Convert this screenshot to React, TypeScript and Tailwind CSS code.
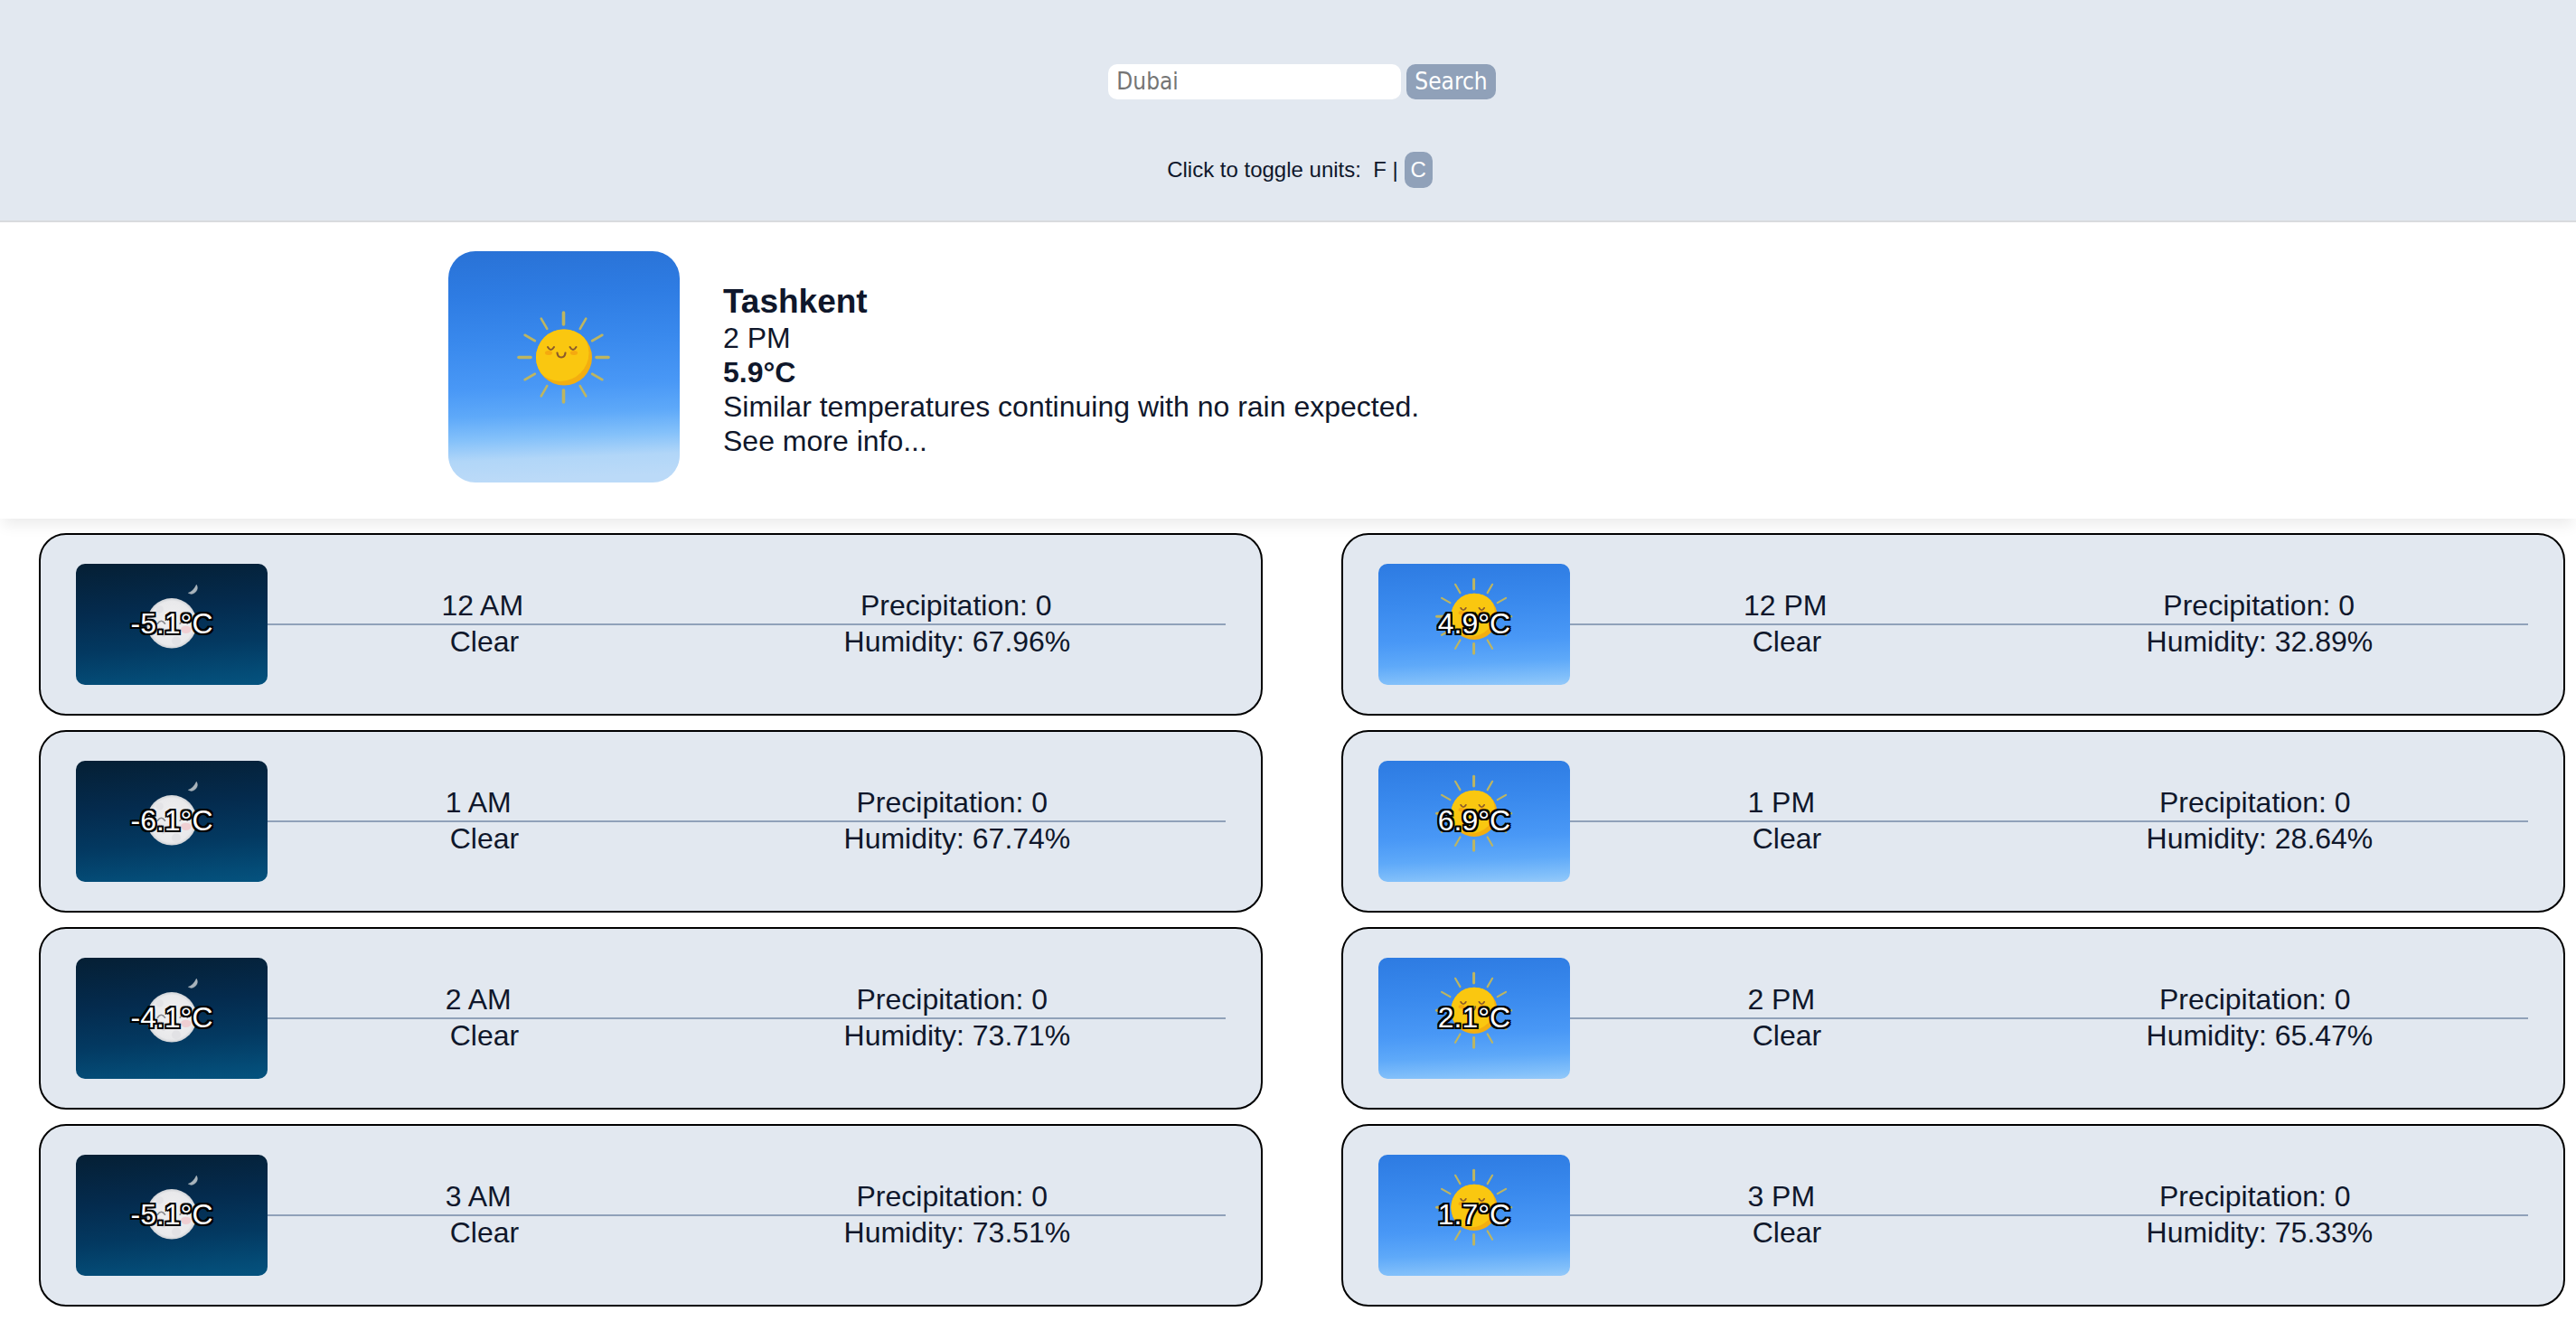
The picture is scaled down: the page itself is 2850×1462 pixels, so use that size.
import { useState } from "react";

type Hour = { time: string; temp: number; humidity: string; night: boolean };

const morning: Hour[] = [
  { time: "12 AM", temp: -5.1, humidity: "67.96", night: true },
  { time: "1 AM", temp: -6.1, humidity: "67.74", night: true },
  { time: "2 AM", temp: -4.1, humidity: "73.71", night: true },
  { time: "3 AM", temp: -5.1, humidity: "73.51", night: true },
];

const afternoon: Hour[] = [
  { time: "12 PM", temp: 4.9, humidity: "32.89", night: false },
  { time: "1 PM", temp: 6.9, humidity: "28.64", night: false },
  { time: "2 PM", temp: 2.1, humidity: "65.47", night: false },
  { time: "3 PM", temp: 1.7, humidity: "75.33", night: false },
];

const rayAngles = [0, 30, 60, 90, 120, 150, 180, 210, 240, 270, 300, 330];

function SunnySky({ id, className }: { id: string; className: string }) {
  return (
    <svg viewBox="0 0 256 256" preserveAspectRatio="xMidYMid slice" className={className} role="img" aria-label="Clear sky with sun">
      <defs>
        <linearGradient id={id} x1="0" y1="0" x2="0.04" y2="1">
          <stop offset="0" stopColor="#2972d6" />
          <stop offset="0.2" stopColor="#2e7ce3" />
          <stop offset="0.4" stopColor="#3989ed" />
          <stop offset="0.6" stopColor="#4998f6" />
          <stop offset="0.72" stopColor="#5ea9f9" />
          <stop offset="0.82" stopColor="#84c1fa" />
          <stop offset="0.91" stopColor="#b1d6f8" />
          <stop offset="1" stopColor="#bbdaf8" />
        </linearGradient>
        <clipPath id={id + "-disc"}>
          <circle cx="128" cy="117.500" r="31" />
        </clipPath>
      </defs>
      <rect width="256" height="256" fill={"url(#" + id + ")"} />
      {rayAngles.map((angle) => (
        <line
          key={angle}
          x1="127.500"
          y1="81"
          x2="127.500"
          y2="68"
          stroke="#bdb561"
          strokeWidth={angle % 90 === 0 ? 3.6 : 2.6}
          strokeLinecap="round"
          transform={"rotate(" + angle + " 127.5 117.5)"}
        />
      ))}
      <circle cx="128" cy="117.500" r="31" fill="#f3ae10" />
      <circle cx="124" cy="112.500" r="31.500" fill="#fac710" clipPath={"url(#" + id + "-disc)"} />
      <ellipse cx="111" cy="112.500" rx="4" ry="2.500" fill="#f5a90f" />
      <ellipse cx="139" cy="112.500" rx="4" ry="2.500" fill="#f5a90f" />
      <g fill="none" stroke="#8a5a2b" strokeLinecap="round">
        <path d="M110 106 q3.500 6 7 0" strokeWidth="2" />
        <path d="M134.500 106 q3.500 6 7 0" strokeWidth="2" />
        <path d="M120.500 112.500 q0.500 5 4.500 5 t4.500 -5" strokeWidth="2.200" />
      </g>
    </svg>
  );
}

function NightSky({ id, className }: { id: string; className: string }) {
  return (
    <svg viewBox="0 0 256 256" preserveAspectRatio="xMidYMid slice" className={className} role="img" aria-label="Clear sky with moon">
      <defs>
        <linearGradient id={id} x1="0" y1="0" x2="0.08" y2="1">
          <stop offset="0" stopColor="#041b2c" />
          <stop offset="0.2" stopColor="#052036" />
          <stop offset="0.45" stopColor="#042b4e" />
          <stop offset="0.65" stopColor="#033961" />
          <stop offset="0.82" stopColor="#044c77" />
          <stop offset="1" stopColor="#055d8a" />
        </linearGradient>
        <radialGradient id={id + "-moon"}>
          <stop offset="0" stopColor="#f0f0f1" />
          <stop offset="0.88" stopColor="#e9e9eb" />
          <stop offset="1" stopColor="#cfd2d6" />
        </radialGradient>
      </defs>
      <rect width="256" height="256" fill={"url(#" + id + ")"} />
      <circle cx="128" cy="126.500" r="33.500" fill={"url(#" + id + "-moon)"} />
      <circle cx="112" cy="108" r="5" fill="#e3e3e6" />
      <circle cx="134" cy="150" r="6" fill="#e2e2e5" />
      <circle cx="117" cy="142" r="3" fill="#dedee1" />
      <ellipse cx="147" cy="135" rx="7" ry="5" fill="#efcfd3" />
      <ellipse cx="110" cy="135" rx="5" ry="4" fill="#ecdcdf" />
      <g fill="none" stroke="#8b8b90" strokeWidth="2" strokeLinecap="round">
        <path d="M109 127 q5 -7 10 0" />
        <path d="M139 127 q5 -7 10 0" />
      </g>
      <path d="M161 75 A8 8 0 0 1 150 86 Q157 84 161 75 Z" fill="#a9b4bc" stroke="#a9b4bc" strokeWidth="0.500" strokeLinejoin="round" />
    </svg>
  );
}

function formatTemp(celsius: number, unit: "C" | "F") {
  const value = unit === "C" ? celsius : (celsius * 9) / 5 + 32;
  return value.toFixed(1) + "°" + unit;
}

function HourCard({ hour, unit }: { hour: Hour; unit: "C" | "F" }) {
  const id = "sky-" + hour.time.replace(" ", "-");
  return (
    <article className="flex items-center rounded-[30px] border-2 border-black bg-slate-200 px-[39px] py-8">
      <div className="grid h-[134px] w-[212px] shrink-0 place-items-center overflow-hidden rounded-[10px]">
        {hour.night ? (
          <NightSky id={id} className="col-start-1 row-start-1 h-[134px] w-full" />
        ) : (
          <SunnySky id={id} className="col-start-1 row-start-1 h-[134px] w-full" />
        )}
        <span className="z-10 col-start-1 row-start-1 pb-0.5 leading-9 text-white [text-shadow:-2px_-2px_0_#000,2px_-2px_0_#000,-2px_2px_0_#000,2px_2px_0_#000,0_-2px_0_#000,0_2px_0_#000,-2px_0_0_#000,2px_0_0_#000]">
          {formatTemp(hour.temp, unit)}
        </span>
      </div>
      <div className="flex-1 leading-9">
        <div className="flex justify-around border-b-2 border-slate-400 px-1.5 pb-0.5">
          <p>{hour.time}</p>
          <p>Precipitation: 0</p>
        </div>
        <div className="flex justify-around pb-0.5">
          <p className="mr-4 ml-[30px]">Clear</p>
          <p>Humidity: {hour.humidity}%</p>
        </div>
      </div>
    </article>
  );
}

export default function App() {
  const [unit, setUnit] = useState<"C" | "F">("C");
  const active = "rounded-[10px] bg-slate-400 px-[7px] leading-10 text-white";
  const idle = "leading-10";

  return (
    <div className="bg-white font-['Liberation_Sans',Arial,sans-serif] text-[32px] text-slate-900">
      <header className="flex flex-col items-center gap-[58px] border-b-2 border-[#d9dbde] bg-slate-200 pt-[71px] pb-9 pl-[31px]">
        <form className="flex gap-1.5 font-[Tahoma,'DejaVu_Sans_Condensed','Noto_Sans',sans-serif] text-[26px]" onSubmit={(e) => e.preventDefault()}>
          <input
            type="text"
            aria-label="City"
            placeholder="Dubai"
            className="h-[39px] w-[324px] rounded-[10px] bg-white px-[9px] placeholder:text-[#757575]"
          />
          <button type="submit" className="h-[39px] rounded-[10px] bg-slate-400 px-[9px] leading-[39px] text-white">
            Search
          </button>
        </form>
        <div className="pr-[5px] text-2xl leading-10 whitespace-pre">
          {"Click to toggle units:  "}
          <button type="button" className={unit === "F" ? active : idle} onClick={() => setUnit("F")}>
            F
          </button>
          {" | "}
          <button type="button" className={unit === "C" ? active : idle} onClick={() => setUnit("C")}>
            C
          </button>
        </div>
      </header>

      <main>
        <section className="flex gap-12 pt-8 pb-10 pl-[496px] shadow-[0_10px_15px_-3px_rgba(0,0,0,0.08)]">
          <SunnySky id="sky-now" className="size-64 shrink-0 rounded-[30px]" />
          <div className="pt-[35px] leading-[38px]">
            <h1 className="text-[37px] leading-[42px] font-bold">Tashkent</h1>
            <p>2 PM</p>
            <p className="font-bold">{formatTemp(5.9, unit)}</p>
            <p>Similar temperatures continuing with no rain expected.</p>
            <a href="#more">See more info...</a>
          </div>
        </section>

        <section className="grid grid-cols-2 gap-x-[87px] pt-4 pr-3 pb-4 pl-[43px]">
          <div className="flex flex-col gap-4">
            {morning.map((hour) => (
              <HourCard key={hour.time} hour={hour} unit={unit} />
            ))}
          </div>
          <div className="flex flex-col gap-4">
            {afternoon.map((hour) => (
              <HourCard key={hour.time} hour={hour} unit={unit} />
            ))}
          </div>
        </section>
      </main>
    </div>
  );
}
